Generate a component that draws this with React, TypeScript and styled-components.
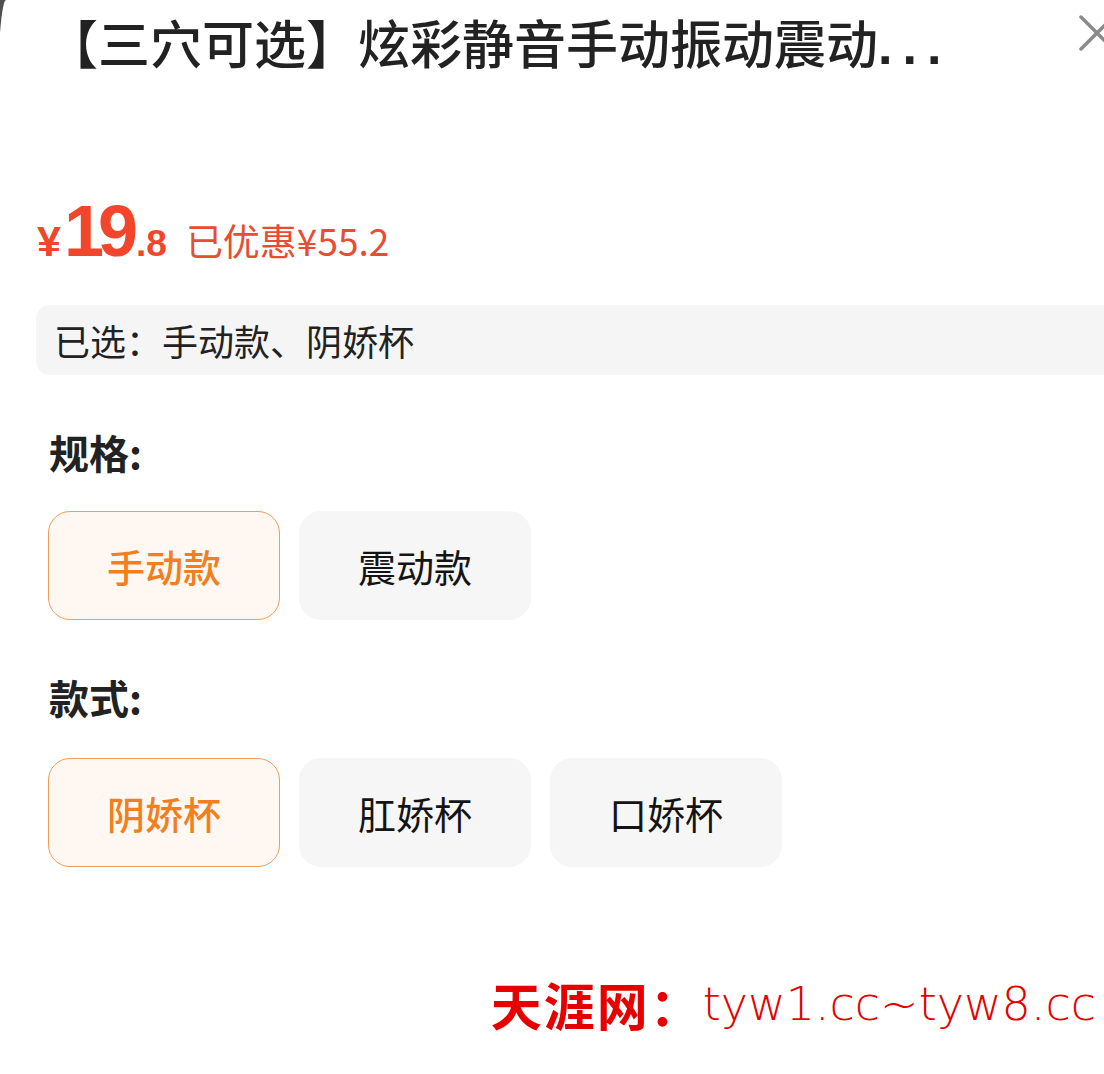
import styled, { createGlobalStyle } from "styled-components";

const GlobalStyle = createGlobalStyle`
  html, body {
    margin: 0;
    padding: 0;
    background: #505050;
    overflow: hidden;
  }
  body {
    font-family: "Noto Sans CJK SC", "Noto Sans", sans-serif;
  }
`;

const Sheet = styled.div`
  position: relative;
  margin-left: -4px;
  padding-left: 4px;
  width: 1104px;
  height: 1074px;
  background: #fff;
  border-top-left-radius: 10px 165px;
  overflow: hidden;
`;

const Header = styled.div`
  display: flex;
  align-items: flex-start;
  padding-top: 16px;
`;

const Title = styled.h1`
  flex: 1;
  margin: 0;
  padding-left: 46px;
  font-size: 52px;
  line-height: 52px;
  font-weight: 500;
  color: #222;
  white-space: nowrap;
`;

const Dots = styled.span`
  font-family: "Liberation Sans", Arial, sans-serif;
  font-weight: 700;
  letter-spacing: 10px;
`;

const CloseButton = styled.div`
  width: 38px;
  height: 38px;
  margin-top: -2px;
  margin-right: -12px;
  flex: none;
`;

const PriceRow = styled.div`
  display: flex;
  align-items: baseline;
  margin-top: 123px;
  padding-left: 37px;
  height: 72px;
  line-height: 72px;
  color: #f1462b;
  font-family: "Liberation Sans", Arial, sans-serif;
  font-weight: 700;
`;

const PriceSign = styled.span`
  font-size: 43px;
`;

const PriceBig = styled.span`
  font-size: 72px;
  letter-spacing: -6px;
  margin-left: 3px;
`;

const PriceCents = styled.span`
  font-size: 37px;
  margin-left: 4px;
`;

const Saved = styled.span`
  margin-left: 19px;
  font-family: "Noto Sans CJK SC", sans-serif;
  font-weight: 400;
  font-size: 37px;
  color: #e94d31;
`;

const SelectedBar = styled.div`
  margin: 38px -30px 0 36px;
  height: 70px;
  display: flex;
  align-items: center;
  padding-left: 18px;
  background: #f5f5f5;
  border-radius: 14px;
  font-size: 36px;
  color: #222;
`;

const Label = styled.div<{ $top: number }>`
  margin-top: ${(p) => p.$top}px;
  padding-left: 49px;
  height: 42px;
  line-height: 42px;
  font-size: 40px;
  font-weight: 700;
  color: #222;
`;

const OptionRow = styled.div<{ $top: number }>`
  display: flex;
  gap: 19px;
  margin-top: ${(p) => p.$top}px;
  padding-left: 48px;
`;

const Option = styled.div<{ $active?: boolean }>`
  box-sizing: border-box;
  width: 232px;
  height: 109px;
  display: flex;
  align-items: center;
  justify-content: center;
  border-radius: 22px;
  font-size: 38px;
  font-weight: ${(p) => (p.$active ? 500 : 400)};
  color: ${(p) => (p.$active ? "#f27f1f" : "#141414")};
  background: ${(p) => (p.$active ? "#fff8f2" : "#f6f6f6")};
  border: 1px solid ${(p) => (p.$active ? "#ee9e58" : "#f6f6f6")};
`;

const Watermark = styled.div`
  margin-top: 111px;
  padding-right: 8px;
  display: flex;
  justify-content: flex-end;
  align-items: center;
  color: #e60000;
  line-height: 52px;
`;

const WatermarkName = styled.span`
  font-family: "Noto Sans CJK SC", serif;
  font-weight: 700;
  font-size: 51px;
  letter-spacing: 2px;
`;

const WatermarkUrl = styled.span`
  font-family: "DejaVu Sans", sans-serif;
  font-weight: 300;
  font-size: 46px;
`;

const specs = [
  { label: "手动款", active: true },
  { label: "震动款" },
];

const styles = [
  { label: "阴娇杯", active: true },
  { label: "肛娇杯" },
  { label: "口娇杯" },
];

export default function App() {
  return (
    <>
      <GlobalStyle />
      <Sheet>
        <Header>
          <Title>
            【三穴可选】炫彩静音手动振动震动<Dots>...</Dots>
          </Title>
          <CloseButton>
            <svg width="38" height="38" viewBox="0 0 38 38">
              <path
                d="M3 3 L35 35 M35 3 L3 35"
                stroke="#8a8a8a"
                strokeWidth="3.5"
                strokeLinecap="round"
              />
            </svg>
          </CloseButton>
        </Header>

        <PriceRow>
          <PriceSign>¥</PriceSign>
          <PriceBig>19</PriceBig>
          <PriceCents>.8</PriceCents>
          <Saved>已优惠¥55.2</Saved>
        </PriceRow>

        <SelectedBar>已选：手动款、阴娇杯</SelectedBar>

        <Label $top={56}>规格:</Label>
        <OptionRow $top={38}>
          {specs.map((s) => (
            <Option key={s.label} $active={s.active}>
              {s.label}
            </Option>
          ))}
        </OptionRow>

        <Label $top={56}>款式:</Label>
        <OptionRow $top={40}>
          {styles.map((s) => (
            <Option key={s.label} $active={s.active}>
              {s.label}
            </Option>
          ))}
        </OptionRow>

        <Watermark>
          <WatermarkName>天涯网：</WatermarkName>
          <WatermarkUrl>tyw1.cc~tyw8.cc</WatermarkUrl>
        </Watermark>
      </Sheet>
    </>
  );
}
